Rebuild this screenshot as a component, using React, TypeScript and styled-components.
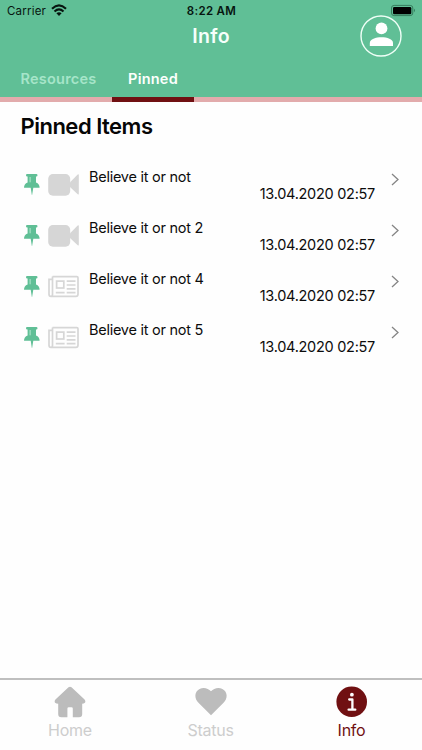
import React from "react";
import styled, { createGlobalStyle } from "styled-components";

const GlobalStyle = createGlobalStyle`
  * { box-sizing: border-box; }
  body { margin: 0; background: #fff; font-family: Inter, "Liberation Sans", sans-serif; }
`;

const Screen = styled.div`
  width: 422px;
  height: 750px;
  display: flex;
  flex-direction: column;
  overflow: hidden;
  background: #fefefe;
  color: #0c0c0c;
`;

const Header = styled.header`
  height: 102px;
  background: #60bf96;
  display: flex;
  flex-direction: column;
`;

const StatusBar = styled.div`
  height: 22px;
  padding: 0 6px 0 7px;
  display: grid;
  grid-template-columns: 1fr auto 1fr;
  font-size: 11.5px;
  line-height: 22px;
  color: #07150f;
`;

const Carrier = styled.div`
  display: flex;
  gap: 5px;
  letter-spacing: 0.2px;
  svg { margin-top: 4px; }
`;

const Clock = styled.div`
  font-weight: 600;
  letter-spacing: 0.32px;
`;

const Battery = styled.div`
  display: flex;
  justify-content: flex-end;
  svg { margin-top: 4px; }
`;

const TitleBar = styled.div`
  height: 38px;
  padding: 0 20px;
  display: grid;
  grid-template-columns: 1fr auto 1fr;
`;

const Title = styled.h1`
  grid-column: 2;
  margin: 0;
  color: #f6fffb;
  font-size: 19.5px;
  line-height: 28px;
  font-weight: 600;
  letter-spacing: 0.35px;
`;

const Avatar = styled.div`
  grid-column: 3;
  justify-self: end;
  margin-top: -7px;
  width: 42px;
  height: 42px;
`;

const Tabs = styled.nav`
  flex: 1;
  display: flex;
  padding-left: 5px;
  border-bottom: 5px solid #e2abac;
`;

const Tab = styled.div<{ $active?: boolean; $width: number }>`
  width: ${(p) => p.$width}px;
  margin-bottom: -5px;
  padding-top: 9px;
  text-align: center;
  font-size: 14.5px;
  line-height: 20px;
  font-weight: 600;
  letter-spacing: 0.22px;
  color: ${(p) => (p.$active ? "#fcfffd" : "#a6e5c9")};
  border-bottom: 5px solid ${(p) => (p.$active ? "#701012" : "transparent")};
`;

const Content = styled.main`
  flex: 1;
`;

const Heading = styled.h2`
  margin: 9px 0 26px 20.5px;
  font-size: 22px;
  line-height: 30px;
  font-weight: 600;
  letter-spacing: -0.5px;
  color: #060606;
`;

const Item = styled.div`
  height: 51px;
  padding: 0 20px 0 23px;
  display: grid;
  grid-template-columns: 17px 33px 1fr 22px;
  column-gap: 8px;
`;

const IconCell = styled.div`
  padding-top: 6px;
  svg { display: block; }
`;

const Details = styled.div`
  display: flex;
  flex-direction: column;
  margin-right: -3px;
`;

const Name = styled.div`
  font-size: 14.5px;
  line-height: 20px;
  letter-spacing: -0.26px;
`;

const Stamp = styled.div`
  align-self: flex-end;
  font-size: 14.5px;
  line-height: 20px;
  letter-spacing: -0.28px;
  margin-top: -3px;
`;

const Arrow = styled.div`
  display: flex;
  justify-content: center;
  padding: 5px 0 0 8px;
`;

const BottomBar = styled.footer`
  height: 72px;
  border-top: 2px solid #bfbfbf;
  display: grid;
  grid-template-columns: 140px 141px 141px;
`;

const NavItem = styled.div<{ $active?: boolean }>`
  display: flex;
  flex-direction: column;
  align-items: center;
  padding-top: 6px;
  font-size: 16px;
  line-height: 20px;
  letter-spacing: -0.25px;
  color: ${(p) => (p.$active ? "#701012" : "#cdcdcd")};
  svg { display: block; margin-bottom: 2px; }
`;

const WifiIcon = () => (
  <svg width="16" height="13" viewBox="0 0 16 13" fill="none" stroke="#07150f" strokeWidth="2.1">
    <path d="M1 4.8Q8-1.9 15 4.8" />
    <path d="M3.5 7.5Q8 3.3 12.5 7.5" />
    <path d="M5.4 9.3Q8 7 10.6 9.3L8 12Z" fill="#07150f" stroke="none" />
  </svg>
);

const BatteryIcon = () => (
  <svg width="26" height="13" viewBox="0 0 26 13">
    <rect x="1.5" y="1.4" width="21.3" height="10.2" rx="2.6" fill="none" stroke="#367d5d" />
    <rect x="3" y="3" width="18.3" height="7.2" rx="1.3" fill="#000" />
    <path d="M24 4.8q2 1.7 0 3.4Z" fill="#367d5d" />
  </svg>
);

const UserIcon = () => (
  <svg width="42" height="42" viewBox="0 0 42 42">
    <circle cx="21" cy="21" r="20" fill="none" stroke="#effff7" strokeWidth="1.4" />
    <circle cx="21.5" cy="13.4" r="5.9" fill="#fff" />
    <path d="M9.800 31v-3.100c0-3.800 6-5.700 11.700-5.700S33 24.100 33 27.900V31Z" fill="#fff" />
  </svg>
);

const PinIcon = () => (
  <svg width="17" height="23" viewBox="0 0 17 23" fill="#60bf96">
    <path d="M4.200 1H13.300Q14.500 1 14.500 2.200T13.300 3.500H13V9.400Q16.600 10.800 16.600 14.800H10.300L9.200 21.500Q9.050 22.700 8.750 21.500L7.700 14.800H1Q1 10.800 4.600 9.400V3.500H4.200Q3 3.500 3 2.200T4.200 1Z" />
    <path d="M7.100 4V9.300" stroke="#b5ead2" strokeWidth="1" />
  </svg>
);

const VideoIcon = () => (
  <svg width="33" height="23" viewBox="0 0 33 23" fill="#d6d6d6">
    <rect x="0.200" y="1" width="22" height="21.700" rx="4.700" />
    <path d="M22 9.200L29.700 1.600Q30.800.7 30.800 2V20.800Q30.800 22.100 29.700 21.200L22 14Z" />
  </svg>
);

const NewsIcon = () => (
  <svg width="33" height="23" viewBox="0 0 33 23" fill="none" stroke="#d6d6d6" strokeWidth="1.700">
    <path d="M4.500 1.600H28.800Q30 1.600 30 2.800V19.300Q30 21.400 27.800 21.400H3Q1 21.400 1 19.300V4.300H4.500M4.500 1.600V19.300Q4.500 21.400 3 21.400" />
    <rect x="8.600" y="6.100" width="7.200" height="6.900" />
    <path d="M18.700 6.100H27.500M18.700 10H27.500M18.700 13.900H27.500M7.800 17.600H16.600M18.700 17.600H27.500" />
  </svg>
);

const ChevronIcon = () => (
  <svg width="10" height="15" viewBox="0 0 10 15" fill="none" stroke="#858585" strokeWidth="1.300">
    <path d="M2 1.900L8 7.500L2 13.100" />
  </svg>
);

const HomeIcon = () => (
  <svg width="32" height="32" viewBox="0 0 32 32" fill="#bcbcbc">
    <path d="M14.500 1.300Q16 .2 17.500 1.300L30.300 13.200Q32.300 15.400 30.500 17.100Q30 17.700 28.200 17.700V28Q28.200 31.200 25 31.200H18.800V22.600Q18.800 21.200 17.400 21.200H14.800Q13.400 21.200 13.400 22.600V31.200H7.300Q4.200 31.200 4.200 28V17.700Q2.100 17.700 1.500 17.100Q-.3 15.400 1.700 13.200Z" />
  </svg>
);

const HeartIcon = () => (
  <svg width="32" height="32" viewBox="0 0 32 32" fill="#bcbcbc">
    <path d="M16 29.200L3.700 17.100C-1.500 12-.2 5 4.600 2.900C9 .9 13.300 2.500 16 5.300C18.700 2.500 23 .9 27.400 2.900C32.200 5 33.500 12 28.300 17.100Z" />
  </svg>
);

const InfoIcon = () => (
  <svg width="32" height="32" viewBox="0 0 32 32">
    <circle cx="15.700" cy="15.700" r="15.300" fill="#701012" />
    <circle cx="15.900" cy="8.700" r="1.900" fill="#fff" />
    <path d="M13.200 13.500H16.400V23.500M12.600 23.700H19.300" fill="none" stroke="#fff" strokeWidth="2.300" strokeLinecap="round" strokeLinejoin="round" />
  </svg>
);

const items = [
  { name: "Believe it or not", kind: "video" },
  { name: "Believe it or not 2", kind: "video" },
  { name: "Believe it or not 4", kind: "news" },
  { name: "Believe it or not 5", kind: "news" },
];

export default function App() {
  return (
    <>
      <GlobalStyle />
      <Screen>
        <Header>
          <StatusBar>
            <Carrier>Carrier <WifiIcon /></Carrier>
            <Clock>8:22 AM</Clock>
            <Battery><BatteryIcon /></Battery>
          </StatusBar>
          <TitleBar>
            <Title>Info</Title>
            <Avatar><UserIcon /></Avatar>
          </TitleBar>
          <Tabs>
            <Tab $width={107}>Resources</Tab>
            <Tab $width={82} $active>Pinned</Tab>
          </Tabs>
        </Header>
        <Content>
          <Heading>Pinned Items</Heading>
          {items.map((item) => (
            <Item key={item.name}>
              <IconCell><PinIcon /></IconCell>
              <IconCell>{item.kind === "video" ? <VideoIcon /> : <NewsIcon />}</IconCell>
              <Details>
                <Name>{item.name}</Name>
                <Stamp>13.04.2020 02:57</Stamp>
              </Details>
              <Arrow><ChevronIcon /></Arrow>
            </Item>
          ))}
        </Content>
        <BottomBar>
          <NavItem><HomeIcon />Home</NavItem>
          <NavItem><HeartIcon />Status</NavItem>
          <NavItem $active><InfoIcon />Info</NavItem>
        </BottomBar>
      </Screen>
    </>
  );
}
